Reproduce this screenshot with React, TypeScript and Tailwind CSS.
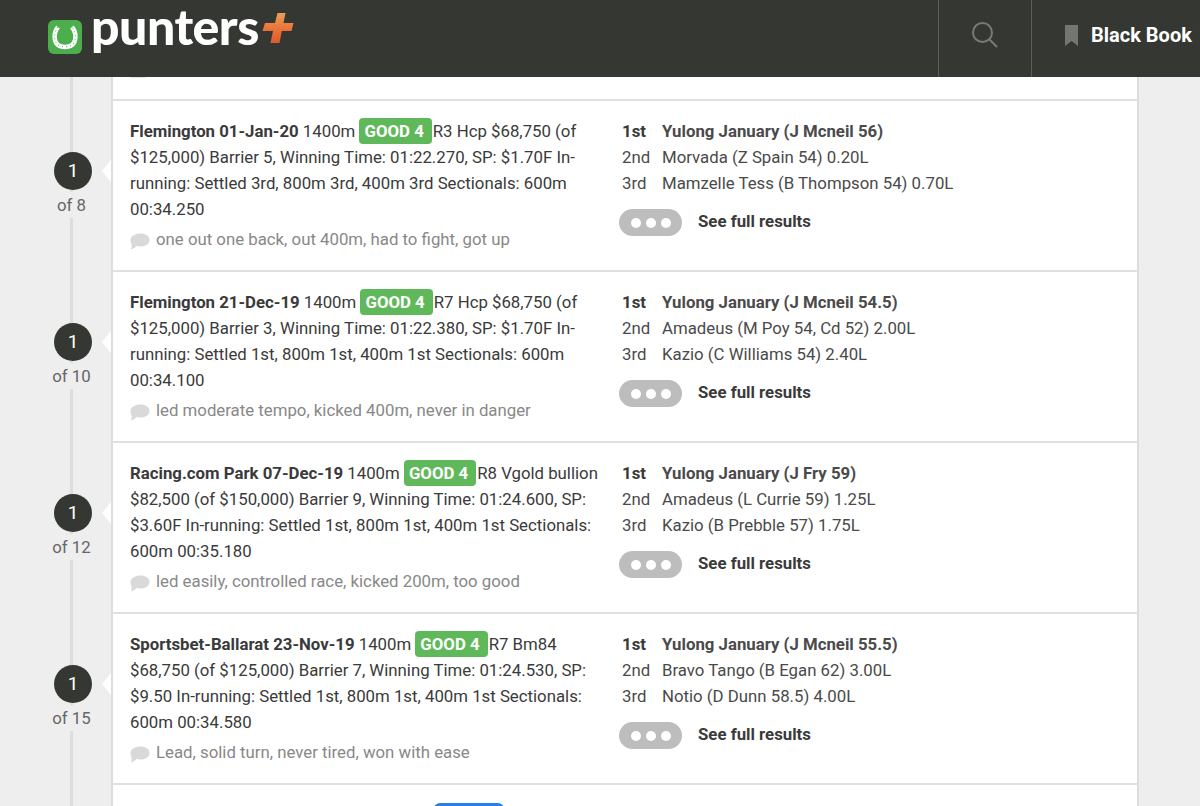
import React from "react";

const races = [
  { pos: "of 8", track: "Flemington 01-Jan-20", rest1: "R3 Hcp $68,750 (of $125,000) Barrier 5, Winning Time: 01:22.270, SP: $1.70F In-running: Settled 3rd, 800m 3rd, 400m 3rd Sectionals: 600m 00:34.250", comment: "one out one back, out 400m, had to fight, got up", first: "Yulong January (J Mcneil 56)", second: "Morvada (Z Spain 54) 0.20L", third: "Mamzelle Tess (B Thompson 54) 0.70L" },
  { pos: "of 10", track: "Flemington 21-Dec-19", rest1: "R7 Hcp $68,750 (of $125,000) Barrier 3, Winning Time: 01:22.380, SP: $1.70F In-running: Settled 1st, 800m 1st, 400m 1st Sectionals: 600m 00:34.100", comment: "led moderate tempo, kicked 400m, never in danger", first: "Yulong January (J Mcneil 54.5)", second: "Amadeus (M Poy 54, Cd 52) 2.00L", third: "Kazio (C Williams 54) 2.40L" },
  { pos: "of 12", track: "Racing.com Park 07-Dec-19", rest1: "R8 Vgold bullion $82,500 (of $150,000) Barrier 9, Winning Time: 01:24.600, SP: $3.60F In-running: Settled 1st, 800m 1st, 400m 1st Sectionals: 600m 00:35.180", comment: "led easily, controlled race, kicked 200m, too good", first: "Yulong January (J Fry 59)", second: "Amadeus (L Currie 59) 1.25L", third: "Kazio (B Prebble 57) 1.75L" },
  { pos: "of 15", track: "Sportsbet-Ballarat 23-Nov-19", rest1: "R7 Bm84 $68,750 (of $125,000) Barrier 7, Winning Time: 01:24.530, SP: $9.50 In-running: Settled 1st, 800m 1st, 400m 1st Sectionals: 600m 00:34.580", comment: "Lead, solid turn, never tired, won with ease", first: "Yulong January (J Mcneil 55.5)", second: "Bravo Tango (B Egan 62) 3.00L", third: "Notio (D Dunn 58.5) 4.00L" },
];

function Horseshoe() {
  return (
    <svg width="34" height="34" viewBox="0 0 34 34">
      <rect width="34" height="34" rx="6" fill="#4cae4c" />
      <path d="M10 7 C5 13 6 22 10 25 C13 27.5 21 27.5 24 25 C28 22 29 13 24 7" fill="none" stroke="#fff" strokeWidth="4.5" />
      <path d="M10 7 C5 13 6 22 10 25 C13 27.5 21 27.5 24 25 C28 22 29 13 24 7" fill="none" stroke="#4cae4c" strokeWidth="1" strokeDasharray="1 3" />
    </svg>
  );
}

function Plus() {
  return (
    <svg width="32" height="32" viewBox="0 0 32 32">
      <defs>
        <linearGradient id="pl" x1="0" y1="0" x2="0" y2="1">
          <stop offset="0" stopColor="#e8a05a" />
          <stop offset="0.5" stopColor="#e9763a" />
          <stop offset="1" stopColor="#dd5a2a" />
        </linearGradient>
      </defs>
      <path d="M15.5 1 H23.5 L21.5 11 H31.5 L29.5 19 H19.8 L17.5 31 H8.5 L11 19 H0.5 L3 11 H13 Z" fill="url(#pl)" />
    </svg>
  );
}

function Bubble() {
  return (
    <svg width="20" height="17" viewBox="0 0 20 17" className="shrink-0 mt-[4px]">
      <path d="M10.5 0.5 C15.5 0.5 19.5 3 19.5 7 C19.5 11 15.5 13.5 10.5 13.5 C9 13.5 7.8 13.3 6.6 13 C5 14.6 2.8 16 1 16.5 C1.6 15 1.8 13 1.6 11.4 C0.8 10 0.5 8.6 0.5 7 C0.5 3 5.5 0.5 10.5 0.5 Z" fill="#d9d9d9" />
    </svg>
  );
}

function Row({ r }: { r: (typeof races)[number] }) {
  return (
    <div className="flex h-[171px]">
      <div className="relative z-10 w-[111px] shrink-0 flex flex-col items-center pt-[51px] pl-[35px]">
        <div className="w-[38px] h-[38px] rounded-full bg-[#353832] text-white flex items-center justify-center text-[19px]">1</div>
        <div className="bg-[#eeeeee] text-[#666] text-[16.8px] leading-[26px] mt-[2px] ml-[-3px] px-1 whitespace-nowrap">{r.pos}</div>
        <div className="absolute right-0 top-[59px] w-[9px] h-[22px] bg-white [clip-path:polygon(100%_0,0_50%,100%_100%)]" />
      </div>
      <div className="w-[1028px] shrink-0 bg-white border-x-2 border-[#dddddd] border-b-2 border-b-[#e0e0e0] flex pl-[17px] pt-[17px]">
        <div className="w-[470px] shrink-0">
          <p className="text-[16.8px] leading-[26px] text-[#3a3a3a]">
            <b className="font-bold">{r.track}</b> 1400m{" "}
            <span className="inline-block bg-[#5fb95a] text-white font-bold rounded-[4px] pl-[5px] pr-[8px] leading-[26px] mr-[1px]">GOOD 4</span>
            {r.rest1}
          </p>
          <div className="flex items-center gap-[6px] mt-[4px] text-[16.8px] leading-[26px] text-[#888888]">
            <Bubble />
            <span>{r.comment}</span>
          </div>
        </div>
        <div className="ml-[22px] text-[16.8px] leading-[26px] text-[#4a4a4a]">
          <div className="flex font-bold"><span className="w-[40px] text-[#3a3a3a]">1st</span><span>{r.first}</span></div>
          <div className="flex"><span className="w-[40px]">2nd</span><span>{r.second}</span></div>
          <div className="flex"><span className="w-[40px]">3rd</span><span>{r.third}</span></div>
          <div className="flex items-center mt-[11px]">
            <div className="w-[63px] h-[27px] ml-[-3px] translate-y-[2px] rounded-full bg-[#bdbdbd] flex items-center justify-center gap-[5px]">
              <span className="w-[10px] h-[10px] rounded-full bg-white" />
              <span className="w-[10px] h-[10px] rounded-full bg-white" />
              <span className="w-[10px] h-[10px] rounded-full bg-white" />
            </div>
            <span className="ml-[16px] font-bold text-[#3a3a3a]">See full results</span>
          </div>
        </div>
      </div>
    </div>
  );
}

export default function App() {
  return (
    <div className="h-[806px] w-[1200px] overflow-hidden bg-[#eeeeee] font-['Roboto',sans-serif]">
      <header className="h-[77px] bg-[#353832] flex items-stretch">
        <div className="flex-1 flex items-start pl-[48px]">
          <div className="mt-[20px]"><Horseshoe /></div>
          <span className="ml-[9px] font-['Lato',sans-serif] font-black text-white text-[50px] leading-[53px] tracking-[-0.5px] whitespace-nowrap">punters</span>
          <div className="mt-[12px] ml-[3px]"><Plus /></div>
        </div>
        <div className="w-[93px] border-l border-[#5c5f5a] flex items-center justify-center pb-[8px]">
          <svg width="28" height="28" viewBox="0 0 28 28" fill="none" stroke="#777a75" strokeWidth="2">
            <circle cx="11.5" cy="11.5" r="9.5" />
            <path d="M18.5 18.5 L26 26" />
          </svg>
        </div>
        <div className="w-[169px] border-l border-[#5c5f5a] flex items-center pl-[33px] pb-[7px]">
          <svg width="13" height="21" viewBox="0 0 13 21" fill="#747672"><path d="M0 0 H13 V21 L6.5 16 L0 21 Z" /></svg>
          <span className="ml-[13px] text-white font-bold text-[20px] whitespace-nowrap">Black Book</span>
        </div>
      </header>
      <main className="relative">
        <div className="absolute left-[70px] top-0 bottom-0 w-[3px] bg-[#dddddd]" />
        <div className="flex h-[24px]">
          <div className="w-[111px] shrink-0" />
          <div className="w-[1028px] shrink-0 bg-white border-x-2 border-[#dddddd] border-b-2 border-b-[#e0e0e0] pl-[17px]">
            <span className="block w-[16px] h-[1px] rounded-b bg-[#e4e4e4]" />
          </div>
        </div>
        {races.map((r) => <Row key={r.pos} r={r} />)}
        <div className="flex h-[30px]">
          <div className="w-[111px] shrink-0" />
          <div className="w-[1028px] shrink-0 bg-white border-x-2 border-[#dddddd] pl-[321px] pt-[18px]">
            <div className="w-[70px] h-[12px] rounded-t-[6px] bg-[#2b7de9]" />
          </div>
        </div>
      </main>
    </div>
  );
}
